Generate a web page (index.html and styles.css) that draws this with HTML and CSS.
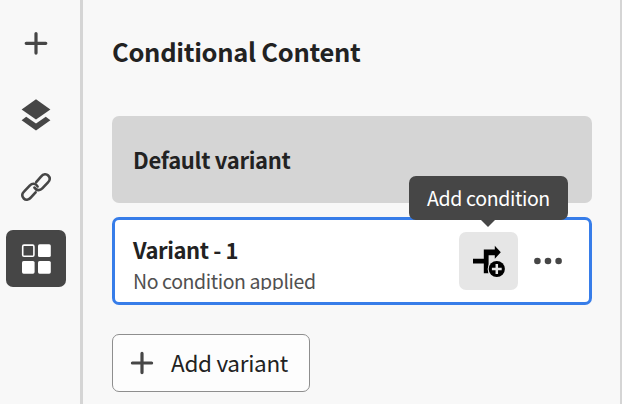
FILE: index.html
```html
<!DOCTYPE html>
<html lang="en">
<head>
<meta charset="utf-8">
<title>Conditional Content</title>
<link rel="stylesheet" href="styles.css">
</head>
<body>
<div class="app">
  <nav class="rail">
    <button class="rail-item" aria-label="Add"><svg width="36" height="36" viewBox="0 0 36 36"><path d="M18 8.5v19.6M8.2 18.3h19.6" stroke="#464646" stroke-width="3.2" stroke-linecap="round"/></svg></button>
    <button class="rail-item" aria-label="Layers"><svg width="36" height="36" viewBox="0 0 36 36" fill="#464646"><path d="M18 2.2 32.4 12.4 18 22.6 3.6 12.4z"/><path d="M8.2 19.8 18 26.6 27.8 19.8 32.4 23.3 18 33.6 3.6 23.3z"/></svg></button>
    <button class="rail-item" aria-label="Links"><svg width="36" height="36" viewBox="0 0 36 36" fill="none" stroke="#464646" stroke-width="2.6" stroke-linecap="round"><path d="M18.2 13.2 23 7.6C25.4 4.6 28.4 4.6 30.2 6.5 32.4 8.7 32.2 11.2 30 13.4L24.3 19.4C21.8 22 18.2 21.6 16.4 18.5"/><path d="M17.6 23.3 13 28.4C10.6 31.4 7.6 31.4 5.8 29.5 3.6 27.3 3.8 24.8 6 22.6L11.7 16.6C14.2 14 17.8 14 19.6 17.5"/></svg></button>
    <button class="rail-item selected" aria-label="Components"><svg width="36" height="36" viewBox="0 0 36 36" fill="#fff"><rect x="4.7" y="4.1" width="11.2" height="11.2" rx="1.3" fill="none" stroke="#fff" stroke-width="1.6"/><rect x="20" y="3.3" width="12.8" height="12.7" rx="1.6"/><rect x="4" y="20" width="12.6" height="12.7" rx="1.6"/><rect x="20" y="20" width="12.8" height="12.7" rx="1.6"/></svg></button>
  </nav>
  <main class="panel">
    <h1 class="title"><span>Conditional Content</span></h1>
    <section class="card default"><h2 class="name">Default variant</h2></section>
    <section class="card active">
      <div class="info">
        <h2 class="name variant-name">Variant - 1</h2>
        <p class="status">No condition applied</p>
      </div>
      <div class="condition">
        <button class="condition-button" aria-label="Add condition"><svg width="36" height="36" viewBox="0 0 36 36"><path d="M2 15.7h10.8V6.4h11V2.8L29.8 9.3 23.8 15.7V12.2H17.6V30.3H12.8V20.6H2z"/><circle cx="25.8" cy="26" r="9.2" fill="#e6e6e6"/><circle cx="25.8" cy="26" r="8.1"/><path d="M25.8 21.1v9.8M20.9 26h9.8" stroke="#e6e6e6" stroke-width="2.5"/></svg></button>
        <div class="tooltip" role="tooltip"><span>Add condition</span></div>
      </div>
      <button class="more" aria-label="More"><svg width="30" height="10" viewBox="0 0 30 10" fill="#464646"><circle cx="4.4" cy="5" r="3.3"/><circle cx="15" cy="5" r="3.3"/><circle cx="25.6" cy="5" r="3.3"/></svg></button>
    </section>
    <button class="add"><svg width="24" height="24" viewBox="0 0 24 24"><path d="M12 2.4v19.2M2.4 12h19.2" stroke="#464646" stroke-width="3.2" stroke-linecap="round"/></svg><span class="add-label">Add variant</span></button>
  </main>
</div>
</body>
</html>
```

FILE: styles.css
```css
* { box-sizing: border-box; }
body {
  margin: 0;
  background: #f8f8f8;
  color: #222;
  font-family: "Noto Sans CJK JP", "Noto Sans", sans-serif;
  overflow: hidden;
}
h1, h2, p { margin: 0; }
button { padding: 0; border: 0; background: none; font: inherit; color: inherit; }
svg { display: block; }
.app { display: flex; height: 404px; }
.rail {
  display: flex;
  flex-direction: column;
  gap: 15px;
  width: 83px;
  padding: 14px 0 0 6px;
  border-right: 3px solid #d5d5d5;
}
.rail-item {
  display: flex;
  align-items: center;
  justify-content: center;
  flex: none;
  width: 60px;
  height: 57px;
  border-radius: 7px;
}
.selected { background: #464646; }
.panel {
  width: 539px;
  padding: 31px 28px 0 29px;
  border-right: 2px solid #d5d5d5;
}
.title {
  height: 85px;
  font-size: 25.5px;
  font-weight: 700;
  letter-spacing: -0.3px;
  line-height: 40px;
  white-space: nowrap;
}
.card { display: flex; align-items: center; width: 480px; border-radius: 7px; }
.default { height: 87px; padding: 0 0 2px 21px; background: #d5d5d5; }
.name {
  font-size: 22px;
  font-weight: 700;
  letter-spacing: -0.3px;
  line-height: 30px;
  white-space: nowrap;
}
.variant-name { letter-spacing: -0.4px; }
.active {
  height: 88px;
  margin-top: 14px;
  padding: 0 26px 0 18px;
  background: #fff;
  border: 3px solid #377de9;
}
.info { flex: 1; padding-top: 2px; }
.status {
  height: 26px;
  overflow: hidden;
  color: #505050;
  font-size: 19.5px;
  letter-spacing: -0.4px;
  line-height: 34px;
  white-space: nowrap;
}
.condition { position: relative; }
.condition-button {
  display: flex;
  align-items: center;
  justify-content: center;
  width: 59px;
  height: 58px;
  border-radius: 7px;
  background: #e6e6e6;
}
.tooltip {
  position: absolute;
  left: -50px;
  bottom: 70px;
  width: 159px;
  height: 44px;
  border-radius: 7px;
  background: #464646;
  color: #fff;
  font-size: 19.5px;
  letter-spacing: -0.36px;
  line-height: 44px;
  text-align: center;
  white-space: nowrap;
}
.tooltip::after {
  content: "";
  position: absolute;
  top: 100%;
  left: 72px;
  border: solid transparent;
  border-width: 7px 7px 0;
  border-top-color: #464646;
}
.more { margin-left: 15px; }
.add {
  display: flex;
  align-items: center;
  gap: 17px;
  width: 198px;
  height: 58px;
  margin-top: 29px;
  padding-left: 17px;
  border: 1px solid #8e8e8e;
  border-radius: 7px;
  background: #fdfdfd;
}
.add-label {
  font-size: 22.5px;
  letter-spacing: -0.3px;
  line-height: 30px;
  white-space: nowrap;
  transform: translateY(-1px);
}
```
